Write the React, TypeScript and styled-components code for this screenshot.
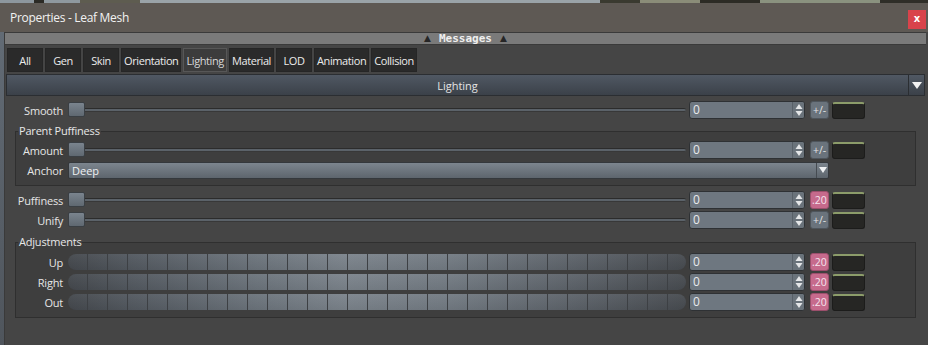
import styled, { createGlobalStyle } from 'styled-components';

const GlobalStyle = createGlobalStyle`
  html, body {
    margin: 0;
    padding: 0;
    background: #454545;
  }
  body {
    font-family: "Open Sans", "Liberation Sans", sans-serif;
    font-size: 11px;
    color: #e6e6e6;
  }
  * { box-sizing: border-box; }
`;

type Step = '+/-' | '.20';
type SliderRow = { label: string; step: Step };

const topRows: SliderRow[] = [
  { label: 'Puffiness', step: '.20' },
  { label: 'Unify', step: '+/-' },
];

const adjustRows = ['Up', 'Right', 'Out'];

const Spinner = () => (
  <SpinBox>
    <svg width="8" height="14" viewBox="0 0 8 14">
      <path d="M4 1 L7.5 6 L0.5 6 Z" fill="#e4e6e8" />
      <path d="M4 13 L7.5 8 L0.5 8 Z" fill="#e4e6e8" />
    </svg>
  </SpinBox>
);

const NumberInput = () => (
  <NumberField>
    <NumberValue>0</NumberValue>
    <Spinner />
  </NumberField>
);

const Tail = ({ step }: { step: Step }) => (
  <>
    <NumberInput />
    <StepButton $pink={step === '.20'}>{step}</StepButton>
    <GreenSwatch />
  </>
);

const Row = ({ label, labelWidth, step }: { label: string; labelWidth: number; step: Step }) => (
  <RowWrap>
    <Label $w={labelWidth}>{label}</Label>
    <Slider>
      <Groove />
      <Thumb />
    </Slider>
    <Tail step={step} />
  </RowWrap>
);

const tabs = ['All', 'Gen', 'Skin', 'Orientation', 'Lighting', 'Material', 'LOD', 'Animation', 'Collision'];

export default function App() {
  return (
    <>
      <GlobalStyle />
      <Window>
        <DesktopStrip />
        <TitleBar>
          <Title>Properties - Leaf Mesh</Title>
          <CloseButton>x</CloseButton>
        </TitleBar>
        <Frame>
          <LeftEdge />
          <Content>
            <MessagesBar>
              <Tri>▲</Tri>
              <MessagesText>Messages</MessagesText>
              <Tri>▲</Tri>
            </MessagesBar>
            <TabRow>
              {tabs.map((t) => (
                <Tab key={t} $active={t === 'Lighting'}>{t}</Tab>
              ))}
            </TabRow>
            <SectionHeader>
              <SectionTitle>Lighting</SectionTitle>
              <SectionArrow>
                <svg width="10" height="7" viewBox="0 0 10 7">
                  <path d="M0 0 L10 0 L5 7 Z" fill="#f2f2f2" />
                </svg>
              </SectionArrow>
            </SectionHeader>
            <Panel>
              <Row label="Smooth" labelWidth={58} step="+/-" />
              <Group $top={5} $pt={3} $pb={6}>
                <Legend>Parent Puffiness</Legend>
                <GroupBody>
                  <Row label="Amount" labelWidth={47} step="+/-" />
                  <RowWrap>
                    <Label $w={47}>Anchor</Label>
                    <Select>
                      <SelectValue>Deep</SelectValue>
                      <SelectArrow>
                        <svg width="8" height="6" viewBox="0 0 8 6">
                          <path d="M0 0 L8 0 L4 6 Z" fill="#eef0f2" />
                        </svg>
                      </SelectArrow>
                    </Select>
                  </RowWrap>
                </GroupBody>
              </Group>
              <Stack $top={5}>
                {topRows.map((r) => (
                  <Row key={r.label} label={r.label} labelWidth={58} step={r.step} />
                ))}
              </Stack>
              <Group $top={6} $pt={4} $pb={6}>
                <Legend>Adjustments</Legend>
                <GroupBody>
                  {adjustRows.map((r) => (
                    <RowWrap key={r}>
                      <Label $w={47}>{r}</Label>
                      <SegmentTrack />
                      <Tail step=".20" />
                    </RowWrap>
                  ))}
                </GroupBody>
              </Group>
            </Panel>
          </Content>
        </Frame>
      </Window>
    </>
  );
}

const Window = styled.div`
  width: 928px;
  height: 345px;
  display: flex;
  flex-direction: column;
  overflow: hidden;
  background: #454545;
`;

const DesktopStrip = styled.div`
  height: 3px;
  background: linear-gradient(
    90deg,
    #8d979e 0 34px,
    #2b2a25 34px 44px,
    #8f999f 44px 80px,
    #5e5c50 80px 140px,
    #9aa3a8 140px 600px,
    #3a3a30 600px 640px,
    #8a8c78 640px 700px,
    #2c2b25 700px 760px,
    #8a927f 760px 880px,
    #2f2e28 880px 928px
  );
`;

const TitleBar = styled.div`
  height: 29px;
  display: flex;
  align-items: center;
  justify-content: space-between;
  padding: 0 2px 0 10px;
  background: #5e5954;
`;

const Title = styled.span`
  font-size: 12px;
  letter-spacing: -0.3px;
  color: #f2f2f2;
`;

const CloseButton = styled.div`
  width: 18px;
  height: 19px;
  margin-top: 3px;
  background: #d9434b;
  color: #fff;
  font-family: "DejaVu Sans", sans-serif;
  font-weight: bold;
  font-size: 10px;
  display: flex;
  align-items: center;
  justify-content: center;
  padding-bottom: 2px;
`;

const Frame = styled.div`
  flex: 1;
  display: flex;
`;

const LeftEdge = styled.div`
  width: 5px;
  background: linear-gradient(#626b75, #4f555c);
  border-right: 1px solid #3a3a3a;
`;

const Content = styled.div`
  flex: 1;
  display: flex;
  flex-direction: column;
`;

const MessagesBar = styled.div`
  height: 13px;
  margin-right: 2px;
  background: #7a7a7a;
  border-top: 1px solid #3a3a3a;
  border-bottom: 1px solid #3a3a3a;
  display: flex;
  align-items: center;
  justify-content: center;
  gap: 8px;
`;

const Tri = styled.span`
  font-family: "DejaVu Sans", sans-serif;
  font-size: 9px;
  color: #262626;
  line-height: 1;
`;

const MessagesText = styled.span`
  font-family: "DejaVu Sans Mono", monospace;
  font-weight: bold;
  font-size: 11px;
  line-height: 1;
  color: #efefef;
`;

const TabRow = styled.div`
  display: flex;
  gap: 2px;
  margin-top: 3px;
  padding-left: 2px;
`;

const Tab = styled.div<{ $active: boolean }>`
  height: 24px;
  min-width: 36px;
  padding: 0 2px;
  display: flex;
  align-items: center;
  justify-content: center;
  letter-spacing: -0.4px;
  background: ${({ $active }) => ($active ? '#3c3c3c' : '#2a2a2a')};
  border: 1px solid ${({ $active }) => ($active ? '#575757' : '#262626')};
  color: ${({ $active }) => ($active ? '#d8d8d8' : '#ececec')};
`;

const SectionHeader = styled.div`
  height: 22px;
  margin: 2px 3px 0 1px;
  display: flex;
  border: 1px solid #2b2e32;
  background: linear-gradient(#505863, #3b4149);
`;

const SectionTitle = styled.div`
  flex: 1;
  display: flex;
  align-items: center;
  justify-content: center;
  color: #e4e4e4;
`;

const SectionArrow = styled.div`
  width: 16px;
  border-left: 1px solid #2b2e32;
  display: flex;
  align-items: center;
  justify-content: center;
`;

const Panel = styled.div`
  display: flex;
  flex-direction: column;
  padding-top: 5px;
`;

const Stack = styled.div<{ $top: number }>`
  display: flex;
  flex-direction: column;
  gap: 2px;
  margin-top: ${({ $top }) => $top}px;
`;

const RowWrap = styled.div`
  height: 18px;
  display: flex;
  align-items: center;
`;

const Label = styled.div<{ $w: number }>`
  width: ${({ $w }) => $w}px;
  margin-right: 5px;
  text-align: right;
  letter-spacing: -0.2px;
  color: #e6e6e6;
`;

const Slider = styled.div`
  position: relative;
  width: 618px;
  height: 18px;
  display: flex;
  align-items: center;
`;

const Groove = styled.div`
  width: 100%;
  height: 4px;
  border-radius: 2px;
  background: #5b6269;
  border-top: 1px solid #2c2c2c;
  border-bottom: 1px solid #383838;
`;

const Thumb = styled.div`
  position: absolute;
  left: 0;
  top: 1px;
  width: 17px;
  height: 15px;
  border-radius: 2px;
  border: 1px solid #3a3f44;
  background: linear-gradient(#7a848e, #5f6871);
`;

const SegmentTrack = styled.div`
  width: 618px;
  height: 16px;
  border-radius: 8px;
  background:
    repeating-linear-gradient(90deg, transparent 0 19px, #3d4044 19px 20px),
    linear-gradient(rgba(255, 255, 255, 0.04), rgba(0, 0, 0, 0.06)),
    linear-gradient(90deg, #45494e 0%, #535960 10%, #6c747c 30%, #7c848c 45%, #737b83 62%, #5d636a 82%, #484c51 100%);
`;

const NumberField = styled.div`
  width: 116px;
  height: 18px;
  margin-left: 3px;
  display: flex;
  border: 1px solid #2e3134;
  border-radius: 3px;
  background: #6e7780;
  overflow: hidden;
`;

const NumberValue = styled.div`
  flex: 1;
  padding-left: 3px;
  font-size: 12px;
  line-height: 16px;
  color: #e8eaec;
`;

const SpinBox = styled.div`
  width: 12px;
  display: flex;
  align-items: center;
  justify-content: center;
  border-left: 1px solid #586068;
  background: #6a737b;
`;

const StepButton = styled.div<{ $pink: boolean }>`
  width: 19px;
  height: 18px;
  margin-left: 5px;
  border-radius: 3px;
  display: flex;
  align-items: center;
  justify-content: center;
  font-size: 10.5px;
  background: ${({ $pink }) => ($pink ? '#c66a8c' : '#6a737c')};
  color: ${({ $pink }) => ($pink ? '#f6e4ec' : '#e2e4e6')};
  border: 1px solid ${({ $pink }) => ($pink ? '#9c4f6c' : '#4e555c')};
`;

const GreenSwatch = styled.div`
  width: 33px;
  height: 17px;
  margin-left: 3px;
  border-radius: 3px;
  background: #262624;
  border: 1px solid #1c1c1b;
  border-top: 2px solid #8c9c6a;
`;

const Group = styled.fieldset<{ $top: number; $pt: number; $pb: number }>`
  margin: ${({ $top }) => $top}px 0 0 10px;
  width: 901px;
  padding: ${({ $pt, $pb }) => `${$pt}px 0 ${$pb}px 0`};
  border: 1px solid #2f2f2f;
  background: #3e3e3e;
  min-width: 0;
`;

const Legend = styled.legend`
  font-size: 11px;
  line-height: 14px;
  padding: 0 1px;
  margin-left: 2px;
  letter-spacing: -0.2px;
  color: #e8e8e8;
`;

const GroupBody = styled.div`
  display: flex;
  flex-direction: column;
  gap: 2px;
`;

const Select = styled.div`
  width: 761px;
  height: 17px;
  display: flex;
  border: 1px solid #34383c;
  border-radius: 2px;
  background: linear-gradient(#7c858e, #5d656d);
`;

const SelectValue = styled.div`
  flex: 1;
  padding-left: 3px;
  line-height: 15px;
  color: #eef0f2;
`;

const SelectArrow = styled.div`
  width: 12px;
  border-left: 1px solid #454b51;
  display: flex;
  align-items: center;
  justify-content: center;
`;
